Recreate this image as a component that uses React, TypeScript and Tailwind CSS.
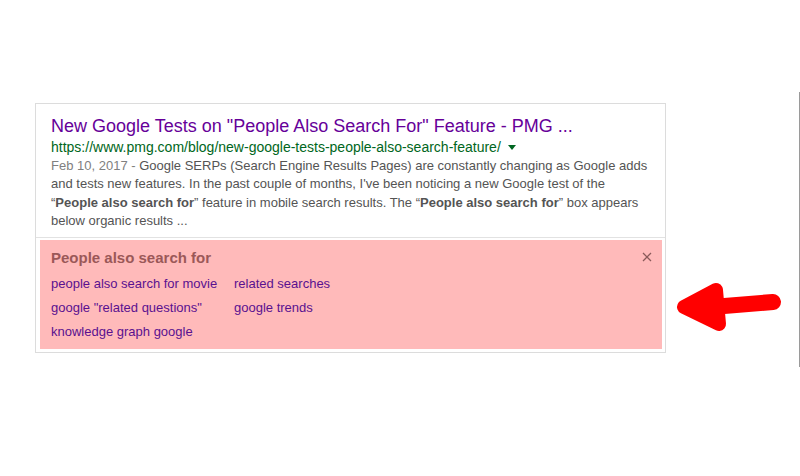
import React from "react";

export default function App() {
  const font = { fontFamily: '"Liberation Sans", Arial, sans-serif' };
  return (
    <div className="relative w-[800px] h-[476px] bg-white overflow-hidden" style={font}>
      <div className="pt-[103px] pl-[35px]">
        <div className="w-[631px] h-[250px] border border-[#dcdcdc] bg-white flex flex-col">
          <div className="pt-[11px] pl-[15px] pr-[10px] h-[133px]">
            <div className="text-[18px] leading-[22px] text-[#660099] whitespace-nowrap">
              New Google Tests on "People Also Search For" Feature - PMG ...
            </div>
            <div className="flex items-center text-[14px] leading-[18px] mt-[1px] text-[#006621] whitespace-nowrap">
              <span>https://www.pmg.com/blog/new-google-tests-people-also-search-feature/</span>
              <span className="ml-[7px] mt-[1px] w-0 h-0 border-l-[4px] border-r-[4px] border-t-[5px] border-l-transparent border-r-transparent border-t-[#006621]" />
            </div>
            <div className="text-[13px] leading-[18.3px] mt-[1px] text-[#545454] whitespace-nowrap">
              <span className="text-[#808080]">Feb 10, 2017 - </span>Google SERPs (Search Engine Results Pages) are constantly changing as Google adds
              <br />
              and tests new features. In the past couple of months, I've been noticing a new Google test of the
              <br />
              “<b>People also search for</b>” feature in mobile search results. The “<b>People also search for</b>” box appears
              <br />
              below organic results ...
            </div>
          </div>
          <div className="h-px bg-[#e2e2e2]" />
          <div className="ml-[4px] mr-[3px] mt-[2px] h-[109px] bg-[#ffbaba] pl-[11px] pt-[8px] relative">
            <div className="text-[15px] leading-[20px] font-bold text-[#9b5858]">People also search for</div>
            <div className="grid grid-cols-[183px_auto] text-[13px] leading-[24px] text-[#5a1190] mt-[4px]">
              <span>people also search for movie</span>
              <span>related searches</span>
              <span>google "related questions"</span>
              <span>google trends</span>
              <span>knowledge graph google</span>
            </div>
            <svg className="absolute right-[10px] top-[12px]" width="10" height="10" viewBox="0 0 10 10">
              <path d="M1 1 L9 9 M9 1 L1 9" stroke="#8a5a5a" strokeWidth="1.3" />
            </svg>
          </div>
        </div>
      </div>
      <svg className="absolute left-0 top-0" width="800" height="476" viewBox="0 0 800 476">
        <path d="M684 307 L716 290 L719 324 Z" fill="#ff0000" stroke="#ff0000" strokeWidth="14" strokeLinejoin="round" />
        <path d="M712 307 L773 302" stroke="#ff0000" strokeWidth="16" strokeLinecap="round" />
      </svg>
      <div className="absolute left-[799px] top-[92px] w-px h-[275px] bg-[#9a9a9a]" />
    </div>
  );
}
